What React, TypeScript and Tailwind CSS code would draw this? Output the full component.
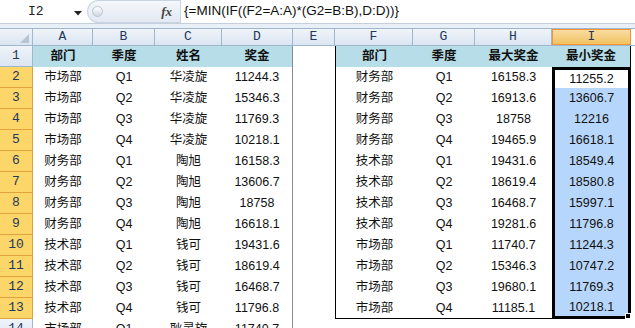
import React from "react";

type Col = { k: string; w: number };
const COLS: Col[] = [
  { k: "A", w: 60 },
  { k: "B", w: 62 },
  { k: "C", w: 67 },
  { k: "D", w: 71 },
  { k: "E", w: 42 },
  { k: "F", w: 78 },
  { k: "G", w: 62 },
  { k: "H", w: 77 },
  { k: "I", w: 79 },
];

const LEFT: string[][] = [
  ["部门", "季度", "姓名", "奖金"],
  ["市场部", "Q1", "华凌旋", "11244.3"],
  ["市场部", "Q2", "华凌旋", "15346.3"],
  ["市场部", "Q3", "华凌旋", "11769.3"],
  ["市场部", "Q4", "华凌旋", "10218.1"],
  ["财务部", "Q1", "陶旭", "16158.3"],
  ["财务部", "Q2", "陶旭", "13606.7"],
  ["财务部", "Q3", "陶旭", "18758"],
  ["财务部", "Q4", "陶旭", "16618.1"],
  ["技术部", "Q1", "钱可", "19431.6"],
  ["技术部", "Q2", "钱可", "18619.4"],
  ["技术部", "Q3", "钱可", "16468.7"],
  ["技术部", "Q4", "钱可", "11796.8"],
  ["市场部", "Q1", "耿灵旋", "11740.7"],
];

const RIGHT: string[][] = [
  ["部门", "季度", "最大奖金", "最小奖金"],
  ["财务部", "Q1", "16158.3", "11255.2"],
  ["财务部", "Q2", "16913.6", "13606.7"],
  ["财务部", "Q3", "18758", "12216"],
  ["财务部", "Q4", "19465.9", "16618.1"],
  ["技术部", "Q1", "19431.6", "18549.4"],
  ["技术部", "Q2", "18619.4", "18580.8"],
  ["技术部", "Q3", "16468.7", "15997.1"],
  ["技术部", "Q4", "19281.6", "11796.8"],
  ["市场部", "Q1", "11740.7", "11244.3"],
  ["市场部", "Q2", "15346.3", "10747.2"],
  ["市场部", "Q3", "19680.1", "11769.3"],
  ["市场部", "Q4", "11185.1", "10218.1"],
  ["", "", "", ""],
];

const dataFont = {
  fontFamily: '"Liberation Sans", "Noto Sans CJK SC", sans-serif',
};
const headFont = {
  fontFamily: '"Liberation Mono", "Noto Sans CJK SC", monospace',
};

function Cell({
  w,
  children,
  className = "",
}: {
  w: number;
  children?: React.ReactNode;
  className?: string;
}) {
  return (
    <div
      className={`relative flex h-full shrink-0 items-center justify-center text-[12.5px] text-[#111] ${className}`}
      style={{ width: w }}
    >
      {children}
    </div>
  );
}

export default function App() {
  const rows = Array.from({ length: 14 }, (_, i) => i + 1);
  return (
    <div className="h-[328px] w-[635px] overflow-hidden bg-white" style={dataFont}>
      {/* Formula bar */}
      <div className="flex h-[24px] border-b border-[#c3cfdd] bg-white">
        <div className="relative flex w-[87px] items-center">
          <span className="ml-[28px] text-[13px] text-[#222]" style={headFont}>
            I2
          </span>
          <svg className="absolute left-[74px] top-[11px]" width="8" height="5" viewBox="0 0 8 5">
            <path d="M0 0 H8 L4 4.5 Z" fill="#222" />
          </svg>
        </div>
        <div className="flex w-[93px] items-center rounded-l-[12px] border border-r-0 border-[#c9d4e2] bg-gradient-to-b from-[#f4f7fb] to-[#e2e9f2]">
          <div className="ml-[4px] h-[11px] w-[11px] rounded-full border border-[#b9c4d2] bg-gradient-to-b from-[#ffffff] to-[#cfd7e2]" />
          <span
            className="ml-auto mr-[8px] text-[13px] font-bold italic text-[#444]"
            style={{ fontFamily: '"Liberation Serif", serif' }}
          >
            fx
          </span>
        </div>
        <div className="flex flex-1 items-center border-l border-[#c9d4e2] pl-[3px]">
          <span className="text-[13.5px] text-[#111]">{"{=MIN(IF((F2=A:A)*(G2=B:B),D:D))}"}</span>
        </div>
      </div>
      {/* band */}
      <div className="h-[5px] border-b border-[#9eb6ce] bg-[#e9eff7]" />
      {/* Column headers */}
      <div className="flex h-[17px] border-b border-[#9eb6ce]" style={headFont}>
        <div className="relative h-full w-[33px] shrink-0 border-r border-[#9eb6ce] bg-gradient-to-b from-[#f0f4fa] to-[#dbe5f1]">
          <svg className="absolute bottom-[2px] right-[3px]" width="9" height="9" viewBox="0 0 9 9">
            <path d="M9 0 V9 H0 Z" fill="#b7c4d4" />
          </svg>
        </div>
        {COLS.map((c) =>
          c.k === "I" ? (
            <div
              key={c.k}
              className="flex h-full shrink-0 items-center justify-center border border-[#f29436] bg-gradient-to-b from-[#f9dca0] to-[#f1c25f] text-[13px] text-[#23385c]"
              style={{ width: c.w }}
            >
              {c.k}
            </div>
          ) : (
            <div
              key={c.k}
              className="flex h-full shrink-0 items-center justify-center border-r border-[#9eb6ce] bg-gradient-to-b from-[#f0f4fa] to-[#dbe5f1] text-[13px] text-[#23385c]"
              style={{ width: c.w }}
            >
              {c.k}
            </div>
          )
        )}
      </div>
      {/* Rows */}
      {rows.map((r) => {
        const sel = r >= 2 && r <= 13;
        const left = LEFT[r - 1];
        const right = RIGHT[r - 1];
        const head = r === 1;
        const inTable = r <= 13;
        return (
          <div key={r} className="flex h-[21px]">
            <div
              className={`flex h-full w-[33px] shrink-0 items-center justify-center border-b border-r text-[13px] text-[#23385c] ${
                sel
                  ? "border-[#e1a13c] bg-[#fcd668]"
                  : "border-[#9eb6ce] bg-gradient-to-b from-[#f0f4fa] to-[#dbe5f1]"
              }`}
              style={headFont}
            >
              {r}
            </div>
            {left.map((t, i) => (
              <Cell
                key={"l" + i}
                w={COLS[i].w}
                className={`${head ? "bg-[#b7dde8] font-bold" : ""} ${i === 3 ? "border-r border-[#8c8c8c]" : ""}`}
              >
                {t}
              </Cell>
            ))}
            <Cell w={COLS[4].w} />
            {right.map((t, i) => {
              let cls = head ? "bg-[#b7dde8] font-bold " : "";
              if (inTable) {
                if (i === 0) cls += "border-l border-black ";
                if (i === 3) cls += "border-r border-black ";
                if (r === 13) cls += "border-b border-black ";
              }
              if (i === 3 && sel) {
                cls =
                  "border-l-[3px] border-r-[3px] border-black " +
                  (r === 2 ? "border-t-[3px] bg-white " : "bg-[#b7d6fb] ") +
                  (r === 13 ? "border-b-[3px] " : "");
              }
              return (
                <Cell key={"r" + i} w={COLS[5 + i].w} className={cls}>
                  {t}
                  {i === 3 && r === 13 && (
                    <span className="absolute -bottom-[3px] -right-[3px] h-[6px] w-[6px] border border-white bg-black" />
                  )}
                </Cell>
              );
            })}
          </div>
        );
      })}
    </div>
  );
}
